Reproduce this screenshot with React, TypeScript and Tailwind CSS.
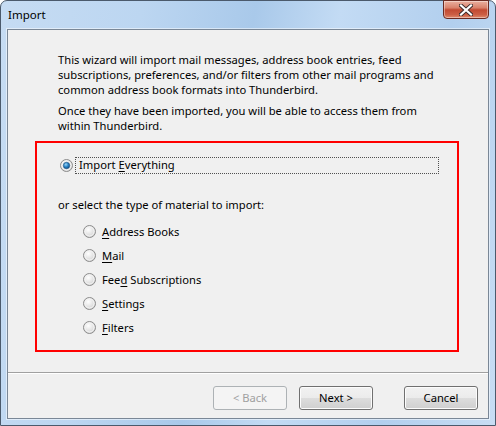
import React from "react";

const font = { fontFamily: '"Noto Sans", "Open Sans", sans-serif' };

function Radio({ checked }: { checked?: boolean }) {
  return (
    <svg width="13" height="13" viewBox="0 0 13 13" className="shrink-0">
      <defs>
        <radialGradient id={checked ? "rgc" : "rgu"} cx="0.4" cy="0.35" r="0.7">
          <stop offset="0" stopColor="#ffffff" />
          <stop offset="1" stopColor="#cfcfcf" />
        </radialGradient>
        <radialGradient id="dot" cx="0.4" cy="0.35" r="0.7">
          <stop offset="0" stopColor="#9fd6f6" />
          <stop offset="0.5" stopColor="#2a86c8" />
          <stop offset="1" stopColor="#0d4a86" />
        </radialGradient>
      </defs>
      <circle cx="6.5" cy="6.5" r="6" fill={`url(#${checked ? "rgc" : "rgu"})`} stroke="#8c8c8c" strokeWidth="1" />
      <circle cx="6.5" cy="6.5" r="4.5" fill="none" stroke="#f4f4f4" strokeWidth="1" />
      {checked && <circle cx="6.5" cy="6.5" r="3.2" fill="url(#dot)" stroke="#1c4f7e" strokeWidth="0.6" />}
    </svg>
  );
}

function Opt({ pre, u, post }: { pre: string; u: string; post: string }) {
  return (
    <div className="flex h-[24px] items-center pl-[46px]">
      <Radio />
      <span className="ml-[6px] text-[11.2px] leading-[15px] text-black">
        {pre}
        <span className="underline underline-offset-2">{u}</span>
        {post}
      </span>
    </div>
  );
}

function Btn({ label, disabled }: { label: string; disabled?: boolean }) {
  return (
    <div
      className={
        "flex h-[24px] w-[74px] items-center justify-center rounded-[3px] border text-[11.2px] " +
        (disabled
          ? "border-[#adb2b5] bg-[#f4f4f4] text-[#a0a0a0]"
          : "border-[#707070] bg-[linear-gradient(#f2f2f2_0%,#ebebeb_50%,#dddddd_51%,#cfcfcf_100%)] text-black shadow-[inset_0_0_0_1px_#fcfcfc]")
      }
    >
      {label}
    </div>
  );
}

export default function App() {
  return (
    <div
      style={font}
      className="flex h-[426px] w-[496px] flex-col rounded-t-[7px] border border-[#4b5a6c] bg-[linear-gradient(100deg,#c6dcf3_0%,#bcd6f1_25%,#a9c9ea_45%,#c3dbf4_60%,#b2cfee_80%,#c8ddf4_100%)]"
    >
      <div className="relative flex h-[28px] shrink-0 items-center pl-[7px]">
        <span className="text-[11.5px] text-black">Import</span>
        <div className="absolute right-[6px] top-[-1px] flex h-[19px] w-[46px] items-center justify-center rounded-b-[4px] border border-[#6a2a22] bg-[linear-gradient(#eab0a0_0%,#d9826c_40%,#c24a32_52%,#cc5e44_80%,#e08a6c_100%)] shadow-[inset_0_0_0_1px_rgba(255,255,255,0.4)]">
          <svg width="14" height="12" viewBox="0 0 14 12">
            <path d="M2 1.5 L12 10.5 M12 1.5 L2 10.5" stroke="#3a2a2a" strokeWidth="4" strokeLinecap="square" />
            <path d="M2 1.5 L12 10.5 M12 1.5 L2 10.5" stroke="#ffffff" strokeWidth="2.2" strokeLinecap="square" />
          </svg>
        </div>
      </div>
      <div className="mx-[6px] flex h-[390px] flex-col border border-[#7a8796] bg-[#f0f0f0] shadow-[0_0_0_1px_rgba(255,255,255,0.5)]">
        <div className="h-[342px] shrink-0 pt-[22px]">
          <div className="pl-[50px] text-[11.2px] leading-[15px] text-black whitespace-nowrap">
            <div>This wizard will import mail messages, address book entries, feed</div>
            <div>subscriptions, preferences, and/or filters from other mail programs and</div>
            <div>common address book formats into Thunderbird.</div>
            <div className="mt-[6px]">Once they have been imported, you will be able to access them from</div>
            <div>within Thunderbird.</div>
          </div>
          <div className="ml-[27px] mt-[8px] h-[211px] w-[424px] border-2 border-[#ff0000]">
            <div className="mt-[14px] flex h-[17px] items-center pl-[23px]">
              <Radio checked />
              <div className="ml-[2px] flex h-[17px] w-[364px] items-center border border-dotted border-[#505050] pl-[3px] text-[11.2px] text-black">
                Import <span className="ml-[3px] underline underline-offset-2">E</span>verything
              </div>
            </div>
            <div className="mt-[23px] pl-[21px] text-[11.2px] leading-[15px] text-black">
              or select the type of material to import:
            </div>
            <div className="mt-[7px]">
              <Opt pre="" u="A" post="ddress Books" />
              <Opt pre="" u="M" post="ail" />
              <Opt pre="Fee" u="d" post=" Subscriptions" />
              <Opt pre="" u="S" post="ettings" />
              <Opt pre="" u="F" post="ilters" />
            </div>
          </div>
        </div>
        <div className="h-[1px] bg-[#a0a0a0]" />
        <div className="h-[1px] bg-white" />
        <div className="flex flex-1 items-start justify-end pr-[10px] pt-[12px]">
          <Btn label="< Back" disabled />
          <div className="ml-[12px]">
            <Btn label="Next >" />
          </div>
          <div className="ml-[31px]">
            <Btn label="Cancel" />
          </div>
        </div>
      </div>
    </div>
  );
}
